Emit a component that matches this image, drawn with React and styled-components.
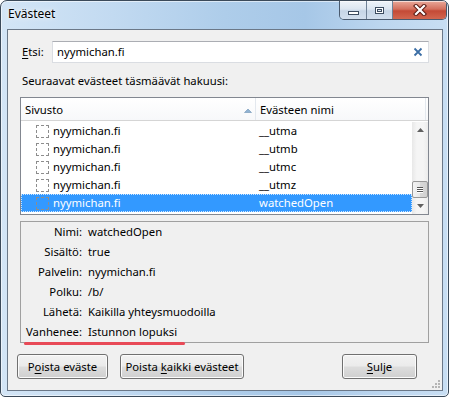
import React from "react";
import styled, { createGlobalStyle } from "styled-components";

const GlobalStyle = createGlobalStyle`
  html, body {
    margin: 0;
    padding: 0;
    background: #ffffff;
  }
  body {
    font-family: "Noto Sans", "Open Sans", sans-serif;
    font-size: 11.3px;
    color: #000;
  }
`;

const Window = styled.div`
  width: 449px;
  height: 397px;
  box-sizing: border-box;
  border: 1px solid #3b4a5a;
  border-radius: 7px 7px 5px 5px;
  background: linear-gradient(
    90deg,
    #d3e5f6 0%,
    #c2daf1 25%,
    #aecdea 50%,
    #a6c7e7 68%,
    #bcd6ef 85%,
    #c8def3 100%
  );
  box-shadow: inset 0 0 0 1px rgba(255, 255, 255, 0.55);
  display: flex;
  flex-direction: column;
  position: relative;
  overflow: hidden;
`;

const TitleBar = styled.div`
  height: 28px;
  flex: none;
  display: flex;
  align-items: flex-start;
`;

const Title = styled.div`
  padding: 5px 0 0 7px;
  font-size: 12px;
  line-height: 16px;
  text-shadow: 0 0 6px rgba(255, 255, 255, 0.95), 0 0 2px rgba(255, 255, 255, 0.9);
`;

const CaptionButtons = styled.div`
  margin-left: auto;
  margin-right: 1px;
  display: flex;
  border: 1px solid #4a5a6e;
  border-top: none;
  border-radius: 0 0 5px 5px;
  overflow: hidden;
  height: 18px;
`;

const CapButton = styled.div`
  width: ${(p) => p.w}px;
  height: 18px;
  display: flex;
  align-items: center;
  justify-content: center;
  border-left: ${(p) => (p.first ? "none" : "1px solid #6f8196")};
  background: ${(p) =>
    p.close
      ? "linear-gradient(180deg, #e9a99a 0%, #d4705e 45%, #c44a36 55%, #d2664f 100%)"
      : "linear-gradient(180deg, #eef3f9 0%, #dce6f1 45%, #c6d5e6 55%, #d2dfee 100%)"};
  box-shadow: inset 0 1px 0 rgba(255, 255, 255, 0.6);
`;

const MinGlyph = styled.span`
  width: 9px;
  height: 2px;
  margin-top: 6px;
  background: #fff;
  border: 1px solid #3c4c60;
`;

const MaxGlyph = styled.span`
  width: 7px;
  height: 5px;
  border: 1px solid #3c4c60;
  box-shadow: inset 0 0 0 1px #fff, inset 0 0 0 2px #3c4c60;
  background: #dce6f1;
`;

const Client = styled.div`
  flex: 1;
  margin: 0 5px 5px 6px;
  border: 1px solid #6b7888;
  background: #f0f0f0;
  display: flex;
  flex-direction: column;
  position: relative;
`;

const SearchRow = styled.div`
  margin: 11px 13px 0 14px;
  display: flex;
  align-items: center;
`;

const Label = styled.label`
  width: 30px;
  flex: none;
  line-height: 16px;
`;

const Key = styled.span`
  text-decoration: underline;
  text-underline-offset: 2px;
`;

const SearchBox = styled.div`
  flex: 1;
  height: 22px;
  box-sizing: border-box;
  border: 1px solid #dadde2;
  border-top-color: #abadb3;
  background: #fff;
  display: flex;
  align-items: center;
  padding: 0 5px 0 4px;
`;

const SearchText = styled.span`
  flex: 1;
  line-height: 18px;
`;

const Caption = styled.div`
  margin: 10px 0 0 14px;
  line-height: 16px;
`;

const Tree = styled.div`
  margin: 8px 13px 0 12px;
  height: 118px;
  box-sizing: border-box;
  border: 1px solid #828790;
  background: #fff;
  display: flex;
  flex-direction: column;
`;

const Header = styled.div`
  height: 23px;
  box-sizing: border-box;
  border-bottom: 1px solid #d5d5d5;
  background: linear-gradient(180deg, #ffffff 0%, #f7f8fa 100%);
  display: grid;
  grid-template-columns: 235px 170px 1fr;
`;

const HeadCell = styled.div`
  display: flex;
  align-items: center;
  padding: 2px 0 0 4px;
  border-right: 1px solid #e3e8ee;
  line-height: 18px;
`;

const SortArrow = styled.svg`
  margin-left: auto;
  margin-right: 3px;
`;

const Body = styled.div`
  flex: 1;
  display: flex;
  padding-top: 1px;
`;

const Rows = styled.div`
  flex: 1;
  display: flex;
  flex-direction: column;
`;

const Row = styled.div`
  height: 18px;
  box-sizing: border-box;
  display: grid;
  grid-template-columns: 236px 1fr;
  align-items: center;
  line-height: 16px;
  background: ${(p) => (p.selected ? "#3399ff" : "transparent")};
  color: ${(p) => (p.selected ? "#fff" : "#000")};
  outline: ${(p) => (p.selected ? "1px dotted #cfe6ff" : "none")};
  outline-offset: -1px;
`;

const SiteCell = styled.div`
  display: flex;
  align-items: center;
  padding-left: 15px;
`;

const Check = styled.span`
  width: 13px;
  height: 13px;
  box-sizing: border-box;
  border: 1px dashed #8d8d8d;
  margin-right: 4px;
  flex: none;
`;

const NameCell = styled.div`
  padding-left: 2px;
`;

const Scrollbar = styled.div`
  width: 16px;
  display: flex;
  flex-direction: column;
  background: linear-gradient(90deg, #e8e8e8 0%, #f5f5f5 30%, #f5f5f5 70%, #ececec 100%);
`;

const ScrollArrow = styled.div`
  height: 16px;
  display: flex;
  align-items: center;
  justify-content: center;
`;

const Track = styled.div`
  flex: 1;
  display: flex;
  flex-direction: column;
  justify-content: flex-end;
`;

const Thumb = styled.div`
  height: 17px;
  box-sizing: border-box;
  border: 1px solid #989898;
  border-radius: 2px;
  background: linear-gradient(90deg, #f3f3f3 0%, #e8e8e8 50%, #d9d9d9 51%, #d0d0d0 100%);
  display: flex;
  flex-direction: column;
  align-items: center;
  justify-content: center;
  gap: 1px;
`;

const Grip = styled.span`
  width: 6px;
  height: 1px;
  background: #555;
  box-shadow: 0 1px 0 #fff;
`;

const Details = styled.div`
  margin: 6px 13px 0 12px;
  height: 122px;
  box-sizing: border-box;
  border: 1px solid #a0a0a0;
  position: relative;
  display: grid;
  grid-template-columns: 61px 1fr;
  grid-auto-rows: 20px;
  column-gap: 6px;
  align-items: center;
  line-height: 16px;
`;

const DLabel = styled.div`
  text-align: right;
  white-space: nowrap;
`;

const Marker = styled.div`
  position: absolute;
  left: 3px;
  bottom: -3px;
  width: 161px;
  height: 3px;
  border-radius: 2px;
  background: #e84a57;
`;

const Buttons = styled.div`
  margin-top: 11px;
  padding: 0 25px 0 9px;
  display: flex;
  gap: 12px;
`;

const Button = styled.div`
  width: ${(p) => p.w}px;
  height: 25px;
  box-sizing: border-box;
  border: 1px solid #707070;
  border-radius: 3px;
  background: linear-gradient(180deg, #f2f2f2 0%, #ebebeb 48%, #dddddd 52%, #cfcfcf 100%);
  box-shadow: inset 0 0 0 1px #fbfbfb;
  display: flex;
  align-items: center;
  justify-content: center;
  line-height: 16px;
  white-space: nowrap;
  margin-left: ${(p) => (p.right ? "auto" : "0")};
`;

const ResizeGrip = styled.svg`
  position: absolute;
  right: 2px;
  bottom: 2px;
`;

const rows = [
  { site: "nyymichan.fi", name: "__utma" },
  { site: "nyymichan.fi", name: "__utmb" },
  { site: "nyymichan.fi", name: "__utmc" },
  { site: "nyymichan.fi", name: "__utmz" },
  { site: "nyymichan.fi", name: "watchedOpen", selected: true },
];

const details = [
  ["Nimi:", "watchedOpen"],
  ["Sisältö:", "true"],
  ["Palvelin:", "nyymichan.fi"],
  ["Polku:", "/b/"],
  ["Lähetä:", "Kaikilla yhteysmuodoilla"],
  ["Vanhenee:", "Istunnon lopuksi"],
];

export default function App() {
  return (
    <>
      <GlobalStyle />
      <Window>
        <TitleBar>
          <Title>Evästeet</Title>
          <CaptionButtons>
            <CapButton w={26} first>
              <MinGlyph />
            </CapButton>
            <CapButton w={25}>
              <MaxGlyph />
            </CapButton>
            <CapButton w={53} close>
              <svg width="14" height="12" viewBox="0 0 14 12">
                <path d="M3 2 L11 10 M11 2 L3 10" stroke="#5a1a12" strokeWidth="4.2" strokeLinecap="square" />
                <path d="M3 2 L11 10 M11 2 L3 10" stroke="#fff" strokeWidth="2.2" strokeLinecap="square" />
              </svg>
            </CapButton>
          </CaptionButtons>
        </TitleBar>

        <Client>
          <SearchRow>
            <Label>
              <Key>E</Key>tsi:
            </Label>
            <SearchBox>
              <SearchText>nyymichan.fi</SearchText>
              <svg width="10" height="10" viewBox="0 0 10 10">
                <path d="M1.5 1.5 L8.5 8.5 M8.5 1.5 L1.5 8.5" stroke="#3b6ea5" strokeWidth="1.8" />
              </svg>
            </SearchBox>
          </SearchRow>

          <Caption>Seuraavat evästeet täsmäävät hakuusi:</Caption>

          <Tree>
            <Header>
              <HeadCell>
                Sivusto
                <SortArrow width="8" height="5" viewBox="0 0 8 5">
                  <path d="M0.5 4.5 L4 1 L7.5 4.5 Z" fill="#8fb2d2" stroke="#6f93b6" strokeWidth="0.6" />
                </SortArrow>
              </HeadCell>
              <HeadCell>Evästeen nimi</HeadCell>
              <div />
            </Header>
            <Body>
              <Rows>
                {rows.map((r, i) => (
                  <Row key={i} selected={r.selected}>
                    <SiteCell>
                      <Check />
                      {r.site}
                    </SiteCell>
                    <NameCell>{r.name}</NameCell>
                  </Row>
                ))}
              </Rows>
              <Scrollbar>
                <ScrollArrow>
                  <svg width="7" height="4" viewBox="0 0 7 4">
                    <path d="M0 4 L3.5 0 L7 4 Z" fill="#606060" />
                  </svg>
                </ScrollArrow>
                <Track>
                  <Thumb>
                    <Grip />
                    <Grip />
                    <Grip />
                  </Thumb>
                </Track>
                <ScrollArrow>
                  <svg width="7" height="4" viewBox="0 0 7 4">
                    <path d="M0 0 L3.5 4 L7 0 Z" fill="#606060" />
                  </svg>
                </ScrollArrow>
              </Scrollbar>
            </Body>
          </Tree>

          <Details>
            {details.map(([k, v]) => (
              <React.Fragment key={k}>
                <DLabel>{k}</DLabel>
                <div>{v}</div>
              </React.Fragment>
            ))}
            <Marker />
          </Details>

          <Buttons>
            <Button w={91}>
              <span>
                P<Key>o</Key>ista eväste
              </span>
            </Button>
            <Button w={124}>
              <span>
                Poista <Key>k</Key>aikki evästeet
              </span>
            </Button>
            <Button w={75} right>
              <span>
                <Key>S</Key>ulje
              </span>
            </Button>
          </Buttons>

          <ResizeGrip width="8" height="8" viewBox="0 0 8 8">
            {[
              [6, 0],
              [6, 3],
              [3, 3],
              [6, 6],
              [3, 6],
              [0, 6],
            ].map(([x, y], i) => (
              <rect key={i} x={x} y={y} width="2" height="2" fill="#b5b5b5" />
            ))}
          </ResizeGrip>
        </Client>
      </Window>
    </>
  );
}
